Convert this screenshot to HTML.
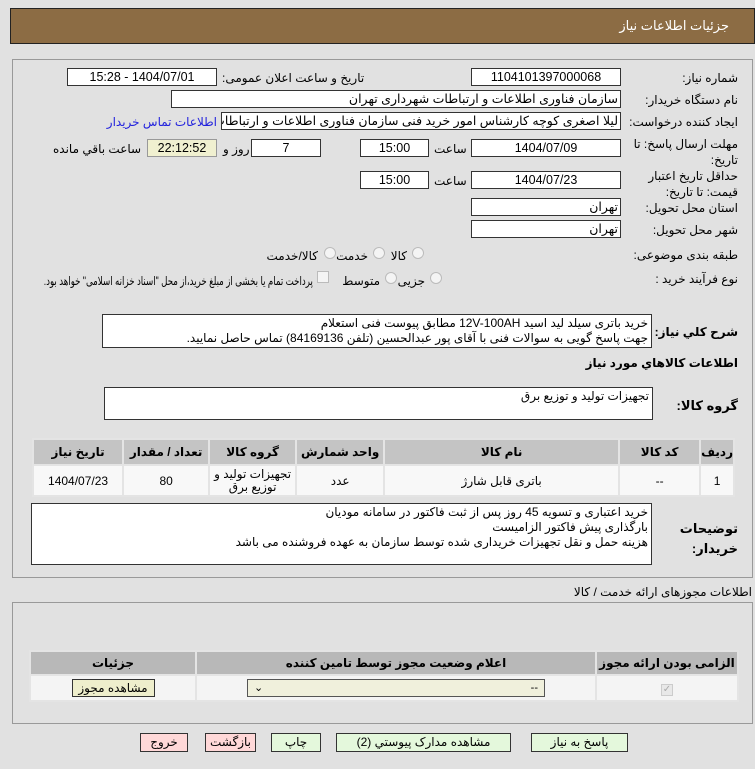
<!DOCTYPE html>
<html><head><meta charset="utf-8"><style>
*{box-sizing:border-box;margin:0;padding:0}
body{width:755px;height:769px;background:#e1e1e1;font-family:"Liberation Sans","DejaVu Sans",sans-serif;font-size:12px;color:#000;position:relative;overflow:hidden}
.a{position:absolute}
.box{position:absolute;background:#fff;border:1px solid #333;height:18px;line-height:16px;text-align:center;font-size:12.5px;overflow:hidden;white-space:nowrap;direction:rtl}
.l{position:absolute;white-space:nowrap;font-size:12px;direction:rtl}
.b{font-weight:bold}
.ta{position:absolute;background:#fff;border:1px solid #333;padding:1px 3px;text-align:right;font-size:12px;line-height:15px;direction:rtl}
table{border-collapse:collapse;position:absolute;direction:rtl}
td{text-align:center;border:2px solid #e4e4e4;font-size:12px}
.btn{position:absolute;height:19px;border:1px solid #333;text-align:center;line-height:17px;font-size:12px;direction:rtl}
.rad{position:absolute;width:12px;height:12px;border-radius:50%;border:1px solid #bbb;background:#f4f4f4}
</style></head><body>
<div class="a" style="left:10px;top:8px;width:745px;height:36px;background:#8c6c44;border:1px solid #222"></div>
<div class="l" style="right:26px;top:18px;color:#fff;font-size:13px">جزئیات اطلاعات نیاز</div>

<div class="a" style="left:12px;top:59px;width:741px;height:519px;border:1px solid #999"></div>

<div class="l" style="right:17px;top:71px">شماره نیاز:</div>
<div class="box" style="left:471px;top:68px;width:150px">1104101397000068</div>
<div class="l" style="left:222px;top:71px">تاریخ و ساعت اعلان عمومی:</div>
<div class="box" style="left:67px;top:68px;width:150px">1404/07/01 - 15:28</div>

<div class="l" style="right:17px;top:93px">نام دستگاه خریدار:</div>
<div class="box" style="left:171px;top:90px;width:450px;text-align:right;padding-right:2px">سازمان فناوری اطلاعات و ارتباطات شهرداری تهران</div>

<div class="l" style="right:17px;top:115px">ایجاد کننده درخواست:</div>
<div class="box" style="left:221px;top:112px;width:400px;text-align:right;padding-right:2px">لیلا اصغری کوچه کارشناس امور خرید فنی سازمان فناوری اطلاعات و ارتباطات ش</div>
<div class="l" style="right:538px;top:115px;color:#2222dd">اطلاعات تماس خریدار</div>

<div class="l" style="right:17px;top:136px;line-height:16px;text-align:right">مهلت ارسال پاسخ: تا<br>تاریخ:</div>
<div class="box" style="left:471px;top:139px;width:150px">1404/07/09</div>
<div class="l" style="left:434px;top:142px">ساعت</div>
<div class="box" style="left:360px;top:139px;width:69px">15:00</div>
<div class="box" style="left:251px;top:139px;width:70px">7</div>
<div class="l" style="left:223px;top:142px">روز و</div>
<div class="box" style="left:147px;top:139px;width:70px;background:#f0f0d0;border-color:#999">22:12:52</div>
<div class="l" style="left:53px;top:142px">ساعت باقي مانده</div>

<div class="l" style="right:17px;top:168px;line-height:16px;text-align:right">حداقل تاریخ اعتبار<br>قیمت: تا تاریخ:</div>
<div class="box" style="left:471px;top:171px;width:150px">1404/07/23</div>
<div class="l" style="left:434px;top:174px">ساعت</div>
<div class="box" style="left:360px;top:171px;width:69px">15:00</div>

<div class="l" style="right:17px;top:201px">استان محل تحویل:</div>
<div class="box" style="left:471px;top:198px;width:150px;text-align:right;padding-right:2px">تهران</div>
<div class="l" style="right:17px;top:223px">شهر محل تحویل:</div>
<div class="box" style="left:471px;top:220px;width:150px;text-align:right;padding-right:2px">تهران</div>

<div class="l" style="right:17px;top:248px">طبقه بندی موضوعی:</div>
<div class="rad" style="left:412px;top:247px"></div><div class="l" style="right:348px;top:249px">کالا</div>
<div class="rad" style="left:373px;top:247px"></div><div class="l" style="right:387px;top:249px">خدمت</div>
<div class="rad" style="left:324px;top:247px"></div><div class="l" style="right:437px;top:249px">کالا/خدمت</div>

<div class="l" style="right:17px;top:272px">نوع فرآیند خرید :</div>
<div class="rad" style="left:430px;top:272px"></div><div class="l" style="right:330px;top:274px">جزیی</div>
<div class="rad" style="left:385px;top:272px"></div><div class="l" style="right:375px;top:274px">متوسط</div>
<div class="a" style="left:317px;top:271px;width:12px;height:12px;border:1px solid #bbb;background:#f4f4f4"></div>
<div class="l" style="right:442px;top:274px;transform:scaleX(0.72);transform-origin:right center">پرداخت تمام یا بخشی از مبلغ خرید،از محل "اسناد خزانه اسلامی" خواهد بود.</div>

<div class="l b" style="right:17px;top:325px">شرح كلي نياز:</div>
<div class="ta" style="left:102px;top:314px;width:550px;height:34px;line-height:15px">خرید باتری سیلد لید اسید 12V-100AH مطابق پیوست فنی استعلام<br>جهت پاسخ گویی به سوالات فنی با آقای پور عبدالحسین (تلفن 84169136) تماس حاصل نمایید.</div>

<div class="l b" style="right:17px;top:356px">اطلاعات کالاهاي مورد نياز</div>
<div class="l b" style="right:17px;top:398px;font-size:13px">گروه کالا:</div>
<div class="ta" style="left:104px;top:387px;width:549px;height:33px">تجهیزات تولید و توزیع برق</div>

<table style="left:32px;top:438px;width:703px;height:59px;background:#f8f8f8;border:1px solid #ccc">
<tr style="background:#c4c4c4;height:26px;font-weight:bold"><td style="width:28px">ردیف</td><td style="width:81px">کد کالا</td><td style="width:235px">نام کالا</td><td style="width:88px">واحد شمارش</td><td style="width:87px">گروه کالا</td><td style="width:86px">تعداد / مقدار</td><td>تاریخ نیاز</td></tr>
<tr><td>1</td><td>--</td><td>باتری قابل شارژ</td><td>عدد</td><td style="line-height:13px">تجهیزات تولید و<br>توزیع برق</td><td>80</td><td>1404/07/23</td></tr>
</table>

<div class="l b" style="right:17px;top:519px;line-height:20px;text-align:right;font-size:13px">توضیحات<br>خریدار:</div>
<div class="ta" style="left:31px;top:503px;width:621px;height:62px">خرید اعتباری و تسویه 45 روز پس از ثبت فاکتور در سامانه مودیان<br>بارگذاری پیش فاکتور الزامیست<br>هزینه حمل و نقل تجهیزات خریداری شده توسط سازمان به عهده فروشنده می باشد</div>

<div class="l" style="right:3px;top:585px">اطلاعات مجوزهای ارائه خدمت / کالا</div>
<div class="a" style="left:12px;top:602px;width:741px;height:122px;border:1px solid #999"></div>
<table style="left:29px;top:650px;width:710px;height:52px;background:#f4f4f4;border:1px solid #ccc">
<tr style="background:#b8b8b8;height:24px;font-weight:bold"><td style="width:142px">الزامی بودن ارائه مجوز</td><td style="width:400px">اعلام وضعیت مجوز توسط تامین کننده</td><td>جزئیات</td></tr>
<tr><td><span style="display:inline-block;width:12px;height:12px;border:1px solid #ccc;background:#e8e8e8;color:#aaa;font-size:10px;line-height:10px">✓</span></td>
<td><div style="margin:0 auto 0 50px;width:298px;height:18px;border:1px solid #555;background:#f0f0dc;display:flex;justify-content:space-between;padding:0 6px;line-height:16px;font-size:11px;direction:ltr"><span>⌄</span><span>--</span></div></td>
<td><div style="margin:0 auto;width:83px;height:18px;border:1px solid #333;background:#eeeecc;line-height:16px">مشاهده مجوز</div></td></tr>
</table>

<div class="btn" style="left:531px;top:733px;width:97px;background:#e4f8dc">پاسخ به نیاز</div>
<div class="btn" style="left:336px;top:733px;width:175px;background:#e4f8dc">مشاهده مدارک پیوستي (2)</div>
<div class="btn" style="left:271px;top:733px;width:50px;background:#e4f8dc">چاپ</div>
<div class="btn" style="left:205px;top:733px;width:51px;background:#ffd8d8">بازگشت</div>
<div class="btn" style="left:140px;top:733px;width:48px;background:#ffd8d8">خروج</div>
</body></html>
